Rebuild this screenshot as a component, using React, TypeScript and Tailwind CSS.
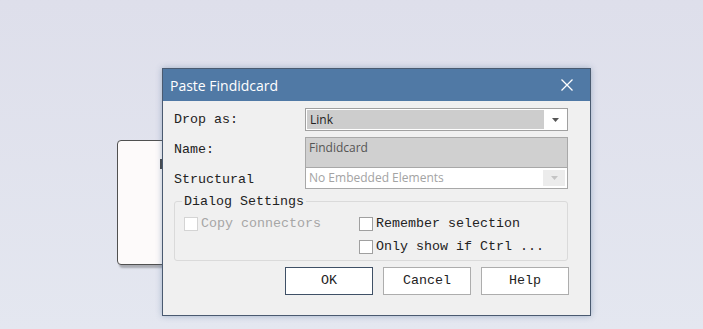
import React from 'react';

const mono = { fontFamily: '"Liberation Mono", "DejaVu Sans Mono", monospace' };
const sans = { fontFamily: '"Open Sans", "Noto Sans", sans-serif' };

const Check: React.FC<{ label: string; disabled?: boolean }> = ({ label, disabled }) => (
  <label className="flex items-center gap-[3px] h-[23px]">
    <span
      className={
        'w-[14px] h-[14px] border bg-white ' +
        (disabled ? 'border-[#d4d4d4]' : 'border-[#a0a0a0]')
      }
    />
    <span className={disabled ? 'text-[#a6a6a6]' : 'text-[#222]'}>{label}</span>
  </label>
);

const Button: React.FC<{ label: string; primary?: boolean }> = ({ label, primary }) => (
  <button
    className={
      'w-[88px] h-[28px] bg-white text-[#222] border ' +
      (primary ? 'border-[#3f5066]' : 'border-[#adadad]')
    }
  >
    {label}
  </button>
);

const App: React.FC = () => {
  return (
    <div className="relative w-[703px] h-[329px] overflow-hidden bg-gradient-to-b from-[#dedfeb] to-[#e4e7f0]">
      {/* element behind the dialog */}
      <div className="absolute left-[117px] top-[140px] w-[60px] h-[125px] rounded-[4px] border border-[#505050] bg-[#fdfafa] shadow-[2px_3px_2px_rgba(0,0,0,0.25)]">
        <div className="absolute left-[42px] top-[18px] w-[3px] h-[10px] bg-[#444]" />
      </div>

      {/* dialog */}
      <div
        className="absolute left-[162px] top-[68px] w-[429px] h-[248px] border border-[#4a5a70] bg-[#f0f0f0] shadow-[0_0_6px_rgba(80,110,150,0.45)] flex flex-col text-[13.33px]"
        style={mono}
      >
        <div className="h-[32px] bg-[#5079a5] flex items-center justify-between pl-[7px] pr-[17px] shrink-0">
          <span className="text-white text-[14px]" style={sans}>
            Paste Findidcard
          </span>
          <svg width="12" height="12" viewBox="0 0 12 12">
            <path d="M0.5 0.5 L11.5 11.5 M11.5 0.5 L0.5 11.5" stroke="#fff" strokeWidth="1.3" />
          </svg>
        </div>

        <div className="flex flex-col pl-[11px] pr-[22px] pt-[7px]">
          {/* Drop as */}
          <div className="flex items-center h-[23px]">
            <span className="w-[131px] text-[#222]">Drop as:</span>
            <div className="flex-1 h-[23px] border border-[#a0a0a0] bg-white p-px flex" style={sans}>
              <div className="flex-1 bg-[#cdcdcd] flex items-center pl-[3px] text-[12px] text-[#222]">Link</div>
              <div className="w-[22px] flex items-center justify-center">
                <svg width="7" height="4" viewBox="0 0 7 4">
                  <path d="M0 0 H7 L3.5 4 Z" fill="#555" />
                </svg>
              </div>
            </div>
          </div>

          {/* Name */}
          <div className="flex items-start mt-[6px]">
            <span className="w-[131px] pt-[3px] text-[#222]">Name:</span>
            <div className="flex-1 h-[31px] border border-[#a8a8a8] bg-[#d0d0d0] pl-[3px] pt-px text-[12px] text-[#555]" style={sans}>
              Findidcard
            </div>
          </div>

          {/* Structural */}
          <div className="flex items-center">
            <span className="w-[131px] pt-[2px] text-[#222]">Structural</span>
            <div className="flex-1 h-[21px] border border-[#a8a8a8] border-t-0 bg-white flex" style={sans}>
              <div className="flex-1 flex items-center pl-[3px] text-[12px] text-[#a3a3a3]">No Embedded Elements</div>
              <div className="w-[22px] my-[2px] mr-[2px] bg-[#ececec] flex items-center justify-center">
                <svg width="7" height="4" viewBox="0 0 7 4">
                  <path d="M0 0 H7 L3.5 4 Z" fill="#c4c4c4" />
                </svg>
              </div>
            </div>
          </div>

          {/* Dialog Settings group */}
          <fieldset className="mt-[4px] h-[67px] border border-[#dadada] rounded-[3px] pl-[9px] pr-[8px] pt-[3px] pb-[6px]">
            <legend className="-ml-[2px] px-[2px] text-[#222] leading-[16px]">Dialog Settings</legend>
            <div className="flex">
              <div className="w-[175px]">
                <Check label="Copy connectors" disabled />
              </div>
              <div className="flex flex-col">
                <Check label="Remember selection" />
                <Check label="Only show if Ctrl ..." />
              </div>
            </div>
          </fieldset>

          {/* buttons */}
          <div className="flex justify-end gap-[10px] mt-[6px] -mr-[1px]">
            <Button label="OK" primary />
            <Button label="Cancel" />
            <Button label="Help" />
          </div>
        </div>
      </div>
    </div>
  );
};

export default App;
